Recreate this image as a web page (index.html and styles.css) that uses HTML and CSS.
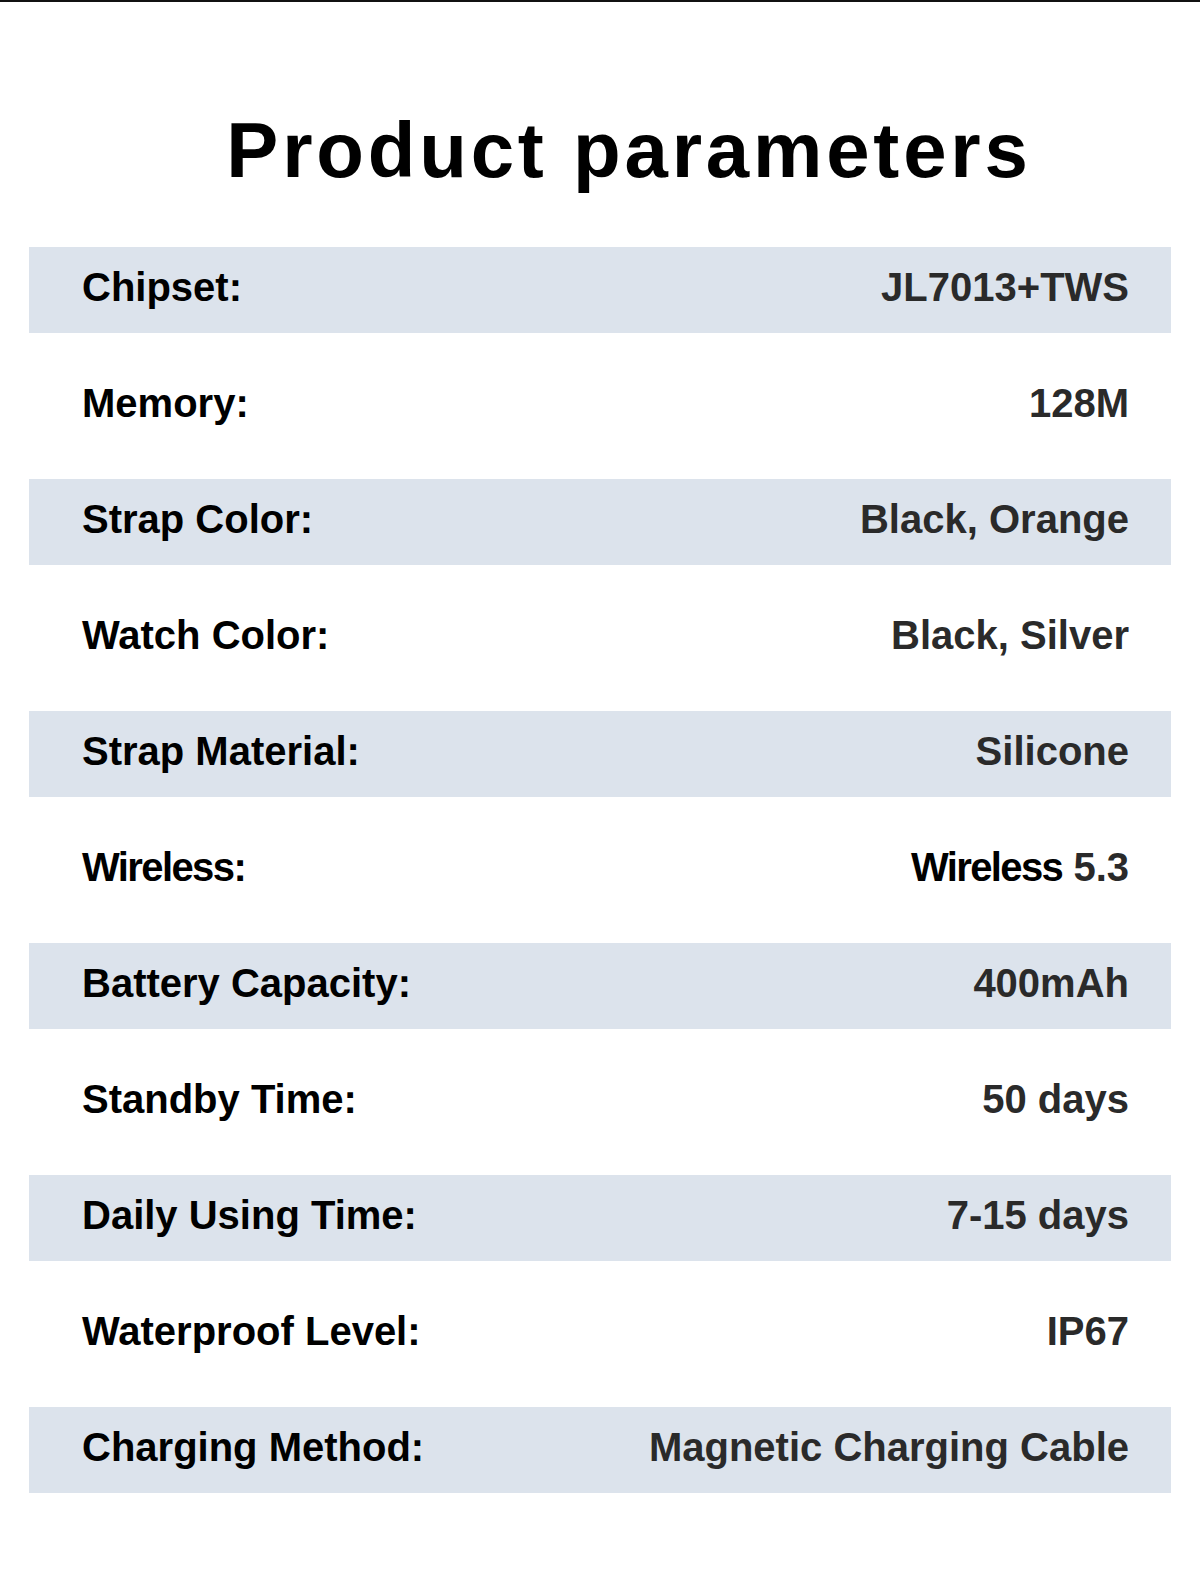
FILE: index.html
```html
<!DOCTYPE html>
<html lang="en">
<head>
<meta charset="utf-8">
<title>Product parameters</title>
<link rel="stylesheet" href="styles.css">
</head>
<body>
<div class="page">
  <h1 class="title">Product parameters</h1>
  <div class="params">
    <div class="row shaded"><span class="label">Chipset:</span><span class="value">JL7013+TWS</span></div>
    <div class="row"><span class="label">Memory:</span><span class="value">128M</span></div>
    <div class="row shaded"><span class="label">Strap Color:</span><span class="value">Black, Orange</span></div>
    <div class="row"><span class="label">Watch Color:</span><span class="value">Black, Silver</span></div>
    <div class="row shaded"><span class="label">Strap Material:</span><span class="value">Silicone</span></div>
    <div class="row"><span class="label tight">Wireless:</span><span class="value"><span class="dark tight">Wireless</span> 5.3</span></div>
    <div class="row shaded"><span class="label">Battery Capacity:</span><span class="value">400mAh</span></div>
    <div class="row"><span class="label">Standby Time:</span><span class="value">50 days</span></div>
    <div class="row shaded"><span class="label">Daily Using Time:</span><span class="value">7-15 days</span></div>
    <div class="row"><span class="label">Waterproof Level:</span><span class="value">IP67</span></div>
    <div class="row shaded"><span class="label">Charging Method:</span><span class="value">Magnetic Charging Cable</span></div>
  </div>
</div>
</body>
</html>
```

FILE: styles.css
```css
html, body {
  margin: 0;
  padding: 0;
  background: #ffffff;
}

.page {
  width: 1200px;
  height: 1573px;
  box-sizing: border-box;
  border-top: 2px solid #111111;
  padding: 109px 29px 0 29px;
  font-family: "Liberation Sans", Arial, sans-serif;
}

.title {
  margin: 0 0 58px 0;
  padding-left: 58px;
  font-size: 78px;
  line-height: 78px;
  font-weight: 700;
  letter-spacing: 3.8px;
  text-align: center;
  color: #000000;
}

.params {
  display: flex;
  flex-direction: column;
  gap: 30px;
}

.row {
  height: 86px;
  box-sizing: border-box;
  display: flex;
  align-items: center;
  justify-content: space-between;
  padding: 0 42px 6px 53px;
  font-size: 40px;
  font-weight: 700;
}

.shaded {
  background: #dce3ec;
}

.label {
  color: #000000;
}

.value {
  color: #2a2a2a;
}

.value .dark {
  color: #000000;
}

.tight {
  letter-spacing: -1.6px;
}
```
